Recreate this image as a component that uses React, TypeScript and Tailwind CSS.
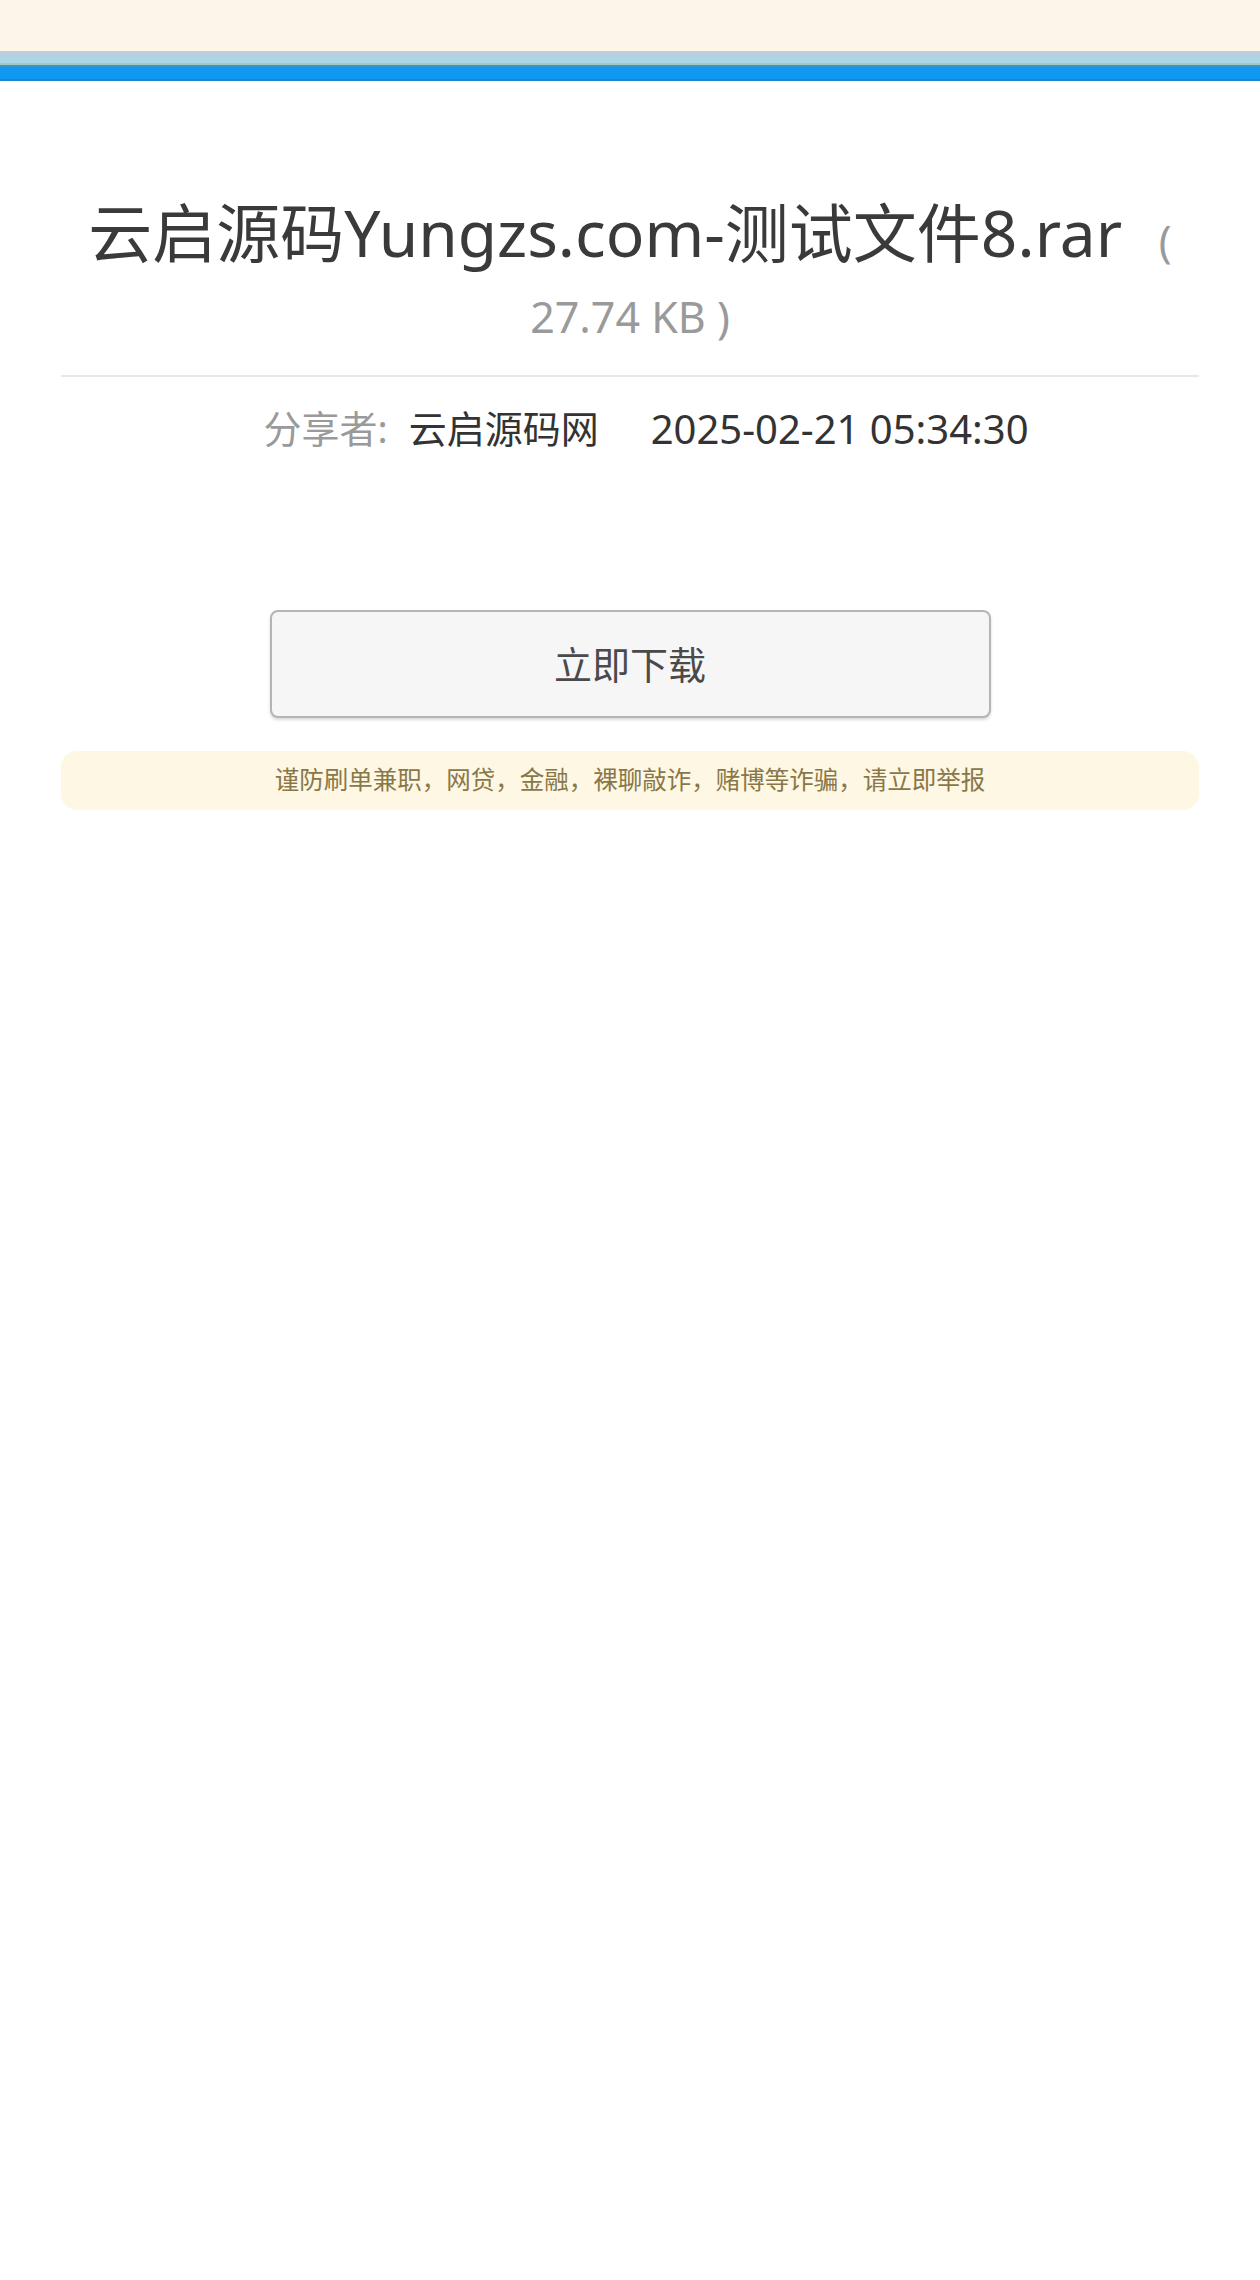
import React from "react";

export default function App() {
  const font = { fontFamily: '"Noto Sans", "Noto Sans CJK SC", sans-serif' };
  return (
    <div className="min-h-[2280px] bg-white" style={font}>
      <div className="h-[51px] bg-[#fdf5ea]" />
      <div className="h-[7px] bg-[#b7cfdf]" />
      <div className="h-[5px] bg-[#a9d7e6]" />
      <div className="h-[2px] bg-[#9fcbbf]" />
      <div className="h-[2px] bg-[#3a90d0]" />
      <div className="h-[12px] bg-[#1098f0]" />
      <div className="h-[2px] bg-[#1888c8]" />

      <div className="px-[61px]">
        <div className="mt-[114px] border-b-2 border-[#e8e8e8] pb-[28px] text-center text-[64px] leading-[76px] text-[#3a3a3a]">
          云启源码Yungzs.com-测试文件8.rar{" "}
          <span className="ml-[20px] text-[43px] leading-none text-[#9a9a9a]">( 27.74 KB )</span>
        </div>

        <div className="mt-[24px] flex items-center justify-center pl-[32px] leading-[55px]">
          <span className="text-[38px] text-[#9a9a9a]">分享者:</span>
          <span className="ml-[21px] text-[38px] text-[#333]">云启源码网</span>
          <span className="ml-[52px] text-[40px] text-[#333]">2025-02-21 05:34:30</span>
        </div>

        <div className="mt-[154px] flex justify-center">
          <div className="flex h-[108px] w-[721px] items-center justify-center rounded-[8px] border-2 border-[#b5b5b5] bg-[#f6f6f6] text-[38px] text-[#4a4a4a] shadow-[0_2px_3px_rgba(0,0,0,0.15)]">
            立即下载
          </div>
        </div>

        <div className="mt-[33px] flex h-[59px] items-center justify-center rounded-[16px] bg-[#fdf7e4] text-[24.5px] text-[#8a7748]">
          谨防刷单兼职，网贷，金融，裸聊敲诈，赌博等诈骗，请立即举报
        </div>
      </div>
    </div>
  );
}
